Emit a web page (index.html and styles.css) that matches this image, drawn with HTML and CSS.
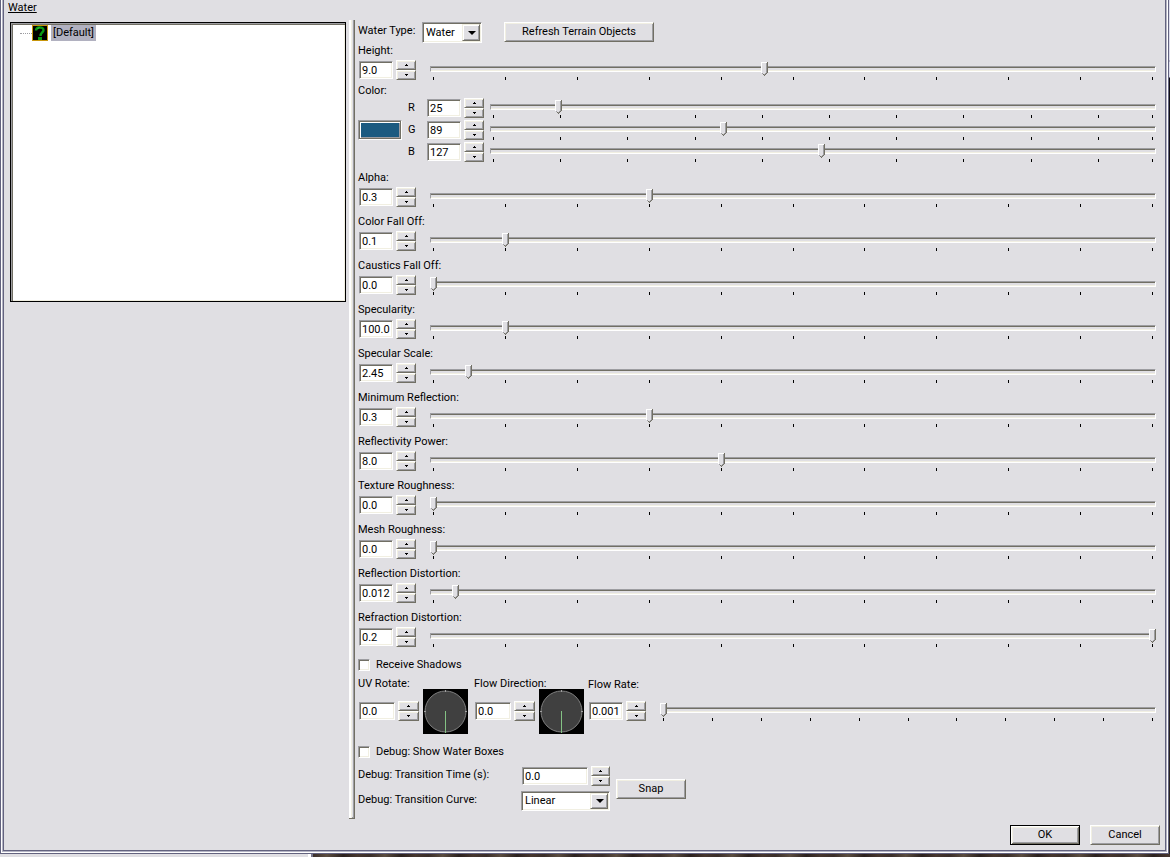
FILE: index.html
```
<!DOCTYPE html>
<html lang="en">
<head>
<meta charset="utf-8">
<title>Water</title>
<link rel="stylesheet" href="styles.css">
</head>
<body>
<div class="desktop">
	<main class="window">
		<h1 class="title">Water</h1>
		<div class="body">
			<div class="tree">
				<div class="node">
					<span class="branch"></span>
					<svg class="icon" width="16" height="16" viewBox="0 0 16 16">
						<rect x="0.5" y="0.5" width="15" height="15" fill="#000" stroke="#c8960c"/>
						<path d="M4 5.5C4 1.5 11.5 1.5 11.5 5C11.5 7.5 8.5 7.5 8.5 11" fill="none" stroke="#0a9a14" stroke-width="2.4"/>
						<path d="M5.5 3.5L7.5 2.5" stroke="#2fd03a"/>
						<rect x="6" y="12" width="4" height="3" fill="#0a9a14"/>
					</svg>
					<span class="node-name">[Default]</span>
				</div>
			</div>
			<div class="splitter"></div>

			<form class="props">
				<div class="type-row">
					<label for="type">Water Type:</label>
					<span class="combo combo-type"><select id="type"><option>Water</option></select></span>
					<button type="button" class="btn refresh">Refresh Terrain Objects</button>
				</div>

				<div class="field first">
					<label for="height">Height:</label>
					<div class="controls">
						<input class="num" id="height" type="text" value="9.0">
						<span class="spin"><button type="button" class="up" aria-label="Up"></button><button type="button" class="down" aria-label="Down"></button></span>
						<div class="slider"><input type="range" aria-label="Height" min="0" max="1000" value="460"></div>
					</div>
				</div>

				<div class="color">
					<div class="color-left">
						<label for="swatch">Color:</label>
						<button type="button" class="swatch" id="swatch"></button>
					</div>
					<div class="channels">
						<div class="controls">
							<label for="red">R</label>
							<input class="num" id="red" type="text" value="25">
							<span class="spin"><button type="button" class="up" aria-label="Up"></button><button type="button" class="down" aria-label="Down"></button></span>
							<div class="slider" data-step="26"><input type="range" aria-label="Red" min="0" max="255" value="25"></div>
						</div>
						<div class="controls">
							<label for="green">G</label>
							<input class="num" id="green" type="text" value="89">
							<span class="spin"><button type="button" class="up" aria-label="Up"></button><button type="button" class="down" aria-label="Down"></button></span>
							<div class="slider" data-step="26"><input type="range" aria-label="Green" min="0" max="255" value="89"></div>
						</div>
						<div class="controls">
							<label for="blue">B</label>
							<input class="num" id="blue" type="text" value="127">
							<span class="spin"><button type="button" class="up" aria-label="Up"></button><button type="button" class="down" aria-label="Down"></button></span>
							<div class="slider" data-step="26"><input type="range" aria-label="Blue" min="0" max="255" value="127"></div>
						</div>
					</div>
				</div>

				<div class="field">
					<label for="alpha">Alpha:</label>
					<div class="controls">
						<input class="num" id="alpha" type="text" value="0.3">
						<span class="spin"><button type="button" class="up" aria-label="Up"></button><button type="button" class="down" aria-label="Down"></button></span>
						<div class="slider"><input type="range" aria-label="Alpha" min="0" max="1000" value="300"></div>
					</div>
				</div>
				<div class="field">
					<label for="color-fall">Color Fall Off:</label>
					<div class="controls">
						<input class="num" id="color-fall" type="text" value="0.1">
						<span class="spin"><button type="button" class="up" aria-label="Up"></button><button type="button" class="down" aria-label="Down"></button></span>
						<div class="slider"><input type="range" aria-label="Color Fall Off" min="0" max="1000" value="100"></div>
					</div>
				</div>
				<div class="field">
					<label for="caustics">Caustics Fall Off:</label>
					<div class="controls">
						<input class="num" id="caustics" type="text" value="0.0">
						<span class="spin"><button type="button" class="up" aria-label="Up"></button><button type="button" class="down" aria-label="Down"></button></span>
						<div class="slider"><input type="range" aria-label="Caustics Fall Off" min="0" max="1000" value="0"></div>
					</div>
				</div>
				<div class="field">
					<label for="specularity">Specularity:</label>
					<div class="controls">
						<input class="num" id="specularity" type="text" value="100.0">
						<span class="spin"><button type="button" class="up" aria-label="Up"></button><button type="button" class="down" aria-label="Down"></button></span>
						<div class="slider"><input type="range" aria-label="Specularity" min="0" max="1000" value="100"></div>
					</div>
				</div>
				<div class="field">
					<label for="spec-scale">Specular Scale:</label>
					<div class="controls">
						<input class="num" id="spec-scale" type="text" value="2.45">
						<span class="spin"><button type="button" class="up" aria-label="Up"></button><button type="button" class="down" aria-label="Down"></button></span>
						<div class="slider"><input type="range" aria-label="Specular Scale" min="0" max="1000" value="49"></div>
					</div>
				</div>
				<div class="field">
					<label for="min-reflection">Minimum Reflection:</label>
					<div class="controls">
						<input class="num" id="min-reflection" type="text" value="0.3">
						<span class="spin"><button type="button" class="up" aria-label="Up"></button><button type="button" class="down" aria-label="Down"></button></span>
						<div class="slider"><input type="range" aria-label="Minimum Reflection" min="0" max="1000" value="300"></div>
					</div>
				</div>
				<div class="field">
					<label for="power">Reflectivity Power:</label>
					<div class="controls">
						<input class="num" id="power" type="text" value="8.0">
						<span class="spin"><button type="button" class="up" aria-label="Up"></button><button type="button" class="down" aria-label="Down"></button></span>
						<div class="slider"><input type="range" aria-label="Reflectivity Power" min="0" max="1000" value="400"></div>
					</div>
				</div>
				<div class="field">
					<label for="texture">Texture Roughness:</label>
					<div class="controls">
						<input class="num" id="texture" type="text" value="0.0">
						<span class="spin"><button type="button" class="up" aria-label="Up"></button><button type="button" class="down" aria-label="Down"></button></span>
						<div class="slider"><input type="range" aria-label="Texture Roughness" min="0" max="1000" value="0"></div>
					</div>
				</div>
				<div class="field">
					<label for="mesh">Mesh Roughness:</label>
					<div class="controls">
						<input class="num" id="mesh" type="text" value="0.0">
						<span class="spin"><button type="button" class="up" aria-label="Up"></button><button type="button" class="down" aria-label="Down"></button></span>
						<div class="slider"><input type="range" aria-label="Mesh Roughness" min="0" max="1000" value="0"></div>
					</div>
				</div>
				<div class="field">
					<label for="reflection">Reflection Distortion:</label>
					<div class="controls">
						<input class="num" id="reflection" type="text" value="0.012">
						<span class="spin"><button type="button" class="up" aria-label="Up"></button><button type="button" class="down" aria-label="Down"></button></span>
						<div class="slider"><input type="range" aria-label="Reflection Distortion" min="0" max="1000" value="31"></div>
					</div>
				</div>
				<div class="field">
					<label for="refraction">Refraction Distortion:</label>
					<div class="controls">
						<input class="num" id="refraction" type="text" value="0.2">
						<span class="spin"><button type="button" class="up" aria-label="Up"></button><button type="button" class="down" aria-label="Down"></button></span>
						<div class="slider"><input type="range" aria-label="Refraction Distortion" min="0" max="1000" value="1000"></div>
					</div>
				</div>

				<div class="check">
					<input type="checkbox" id="shadows">
					<label for="shadows">Receive Shadows</label>
				</div>

				<div class="flow">
					<div class="turn">
						<div>
							<label for="uv">UV Rotate:</label>
							<div class="controls">
								<input class="num" id="uv" type="text" value="0.0">
								<span class="spin"><button type="button" class="up" aria-label="Up"></button><button type="button" class="down" aria-label="Down"></button></span>
							</div>
						</div>
						<svg class="dial" width="45" height="45" viewBox="0 0 45 45">
							<rect width="45" height="45" fill="#000"/>
							<circle cx="22.5" cy="22.5" r="20.5" fill="#404040" stroke="#808080"/>
							<path d="M22.5 1v2M22.5 42v2M1 22.5h2M42 22.5h2" stroke="#a0a0a0"/>
							<path d="M22.5 22v22" stroke="#84c284"/>
						</svg>
					</div>
					<div class="turn">
						<div>
							<label for="direction">Flow Direction:</label>
							<div class="controls">
								<input class="num" id="direction" type="text" value="0.0">
								<span class="spin"><button type="button" class="up" aria-label="Up"></button><button type="button" class="down" aria-label="Down"></button></span>
							</div>
						</div>
						<svg class="dial" width="45" height="45" viewBox="0 0 45 45">
							<rect width="45" height="45" fill="#000"/>
							<circle cx="22.5" cy="22.5" r="20.5" fill="#404040" stroke="#808080"/>
							<path d="M22.5 1v2M22.5 42v2M1 22.5h2M42 22.5h2" stroke="#a0a0a0"/>
							<path d="M22.5 22v22" stroke="#84c284"/>
						</svg>
					</div>
					<div class="rate">
						<label for="rate">Flow Rate:</label>
						<div class="controls">
							<input class="num" id="rate" type="text" value="0.001">
							<span class="spin"><button type="button" class="up" aria-label="Up"></button><button type="button" class="down" aria-label="Down"></button></span>
							<div class="slider"><input type="range" aria-label="Flow Rate" min="0" max="1000" value="0"></div>
						</div>
					</div>
				</div>

				<div class="check">
					<input type="checkbox" id="boxes">
					<label for="boxes">Debug: Show Water Boxes</label>
				</div>

				<div class="debug">
					<div class="debug-grid">
						<label for="time">Debug: Transition Time (s):</label>
						<div class="controls">
							<input class="num wide" id="time" type="text" value="0.0">
							<span class="spin"><button type="button" class="up" aria-label="Up"></button><button type="button" class="down" aria-label="Down"></button></span>
						</div>
						<label for="curve">Debug: Transition Curve:</label>
						<span class="combo combo-curve"><select id="curve"><option>Linear</option></select></span>
					</div>
					<button type="button" class="btn">Snap</button>
				</div>
			</form>
		</div>

		<div class="actions">
			<button type="button" class="btn default">OK</button>
			<button type="button" class="btn">Cancel</button>
		</div>
	</main>
	<div class="side"></div>
	<div class="below"><div class="below-panel"></div><div class="below-view"></div></div>
</div>

<script src="script.js"></script>
</body>
</html>
```

FILE: styles.css
```
* {
	box-sizing: border-box;
}

body {
	margin: 0;
	background: #e0dfe3;
	color: #000;
	font: 11px/16px Roboto, "Liberation Sans", sans-serif;
}

button, input, select {
	font: inherit;
	color: inherit;
	margin: 0;
	padding: 0;
	border-radius: 0;
}

.desktop {
	display: grid;
	grid-template-columns: 1fr 1px;
	grid-template-rows: 1fr 3px;
	min-height: 100vh;
}

.window {
	display: flex;
	flex-direction: column;
	padding: 0 5px 5px 6px;
	border: solid #63637f;
	border-width: 0 1px 1px;
	box-shadow: inset 1px 0 #fff, inset -1px -1px #fff, inset 2px 0 #b4b4c4, inset -2px -2px #b4b4c4, inset 3px 0 #63637f, inset -3px -3px #63637f;
}

.side {
	background: linear-gradient(#dcdcec 60px, #9090a4 61px, #dcdcec 62px, #dcdcec 77px, #100e14 78px, #2c2622);
}

.below {
	grid-column: 1 / 3;
	display: flex;
}

.below-panel {
	width: 313px;
	border-right: 2px solid #77778c;
	box-shadow: inset -3px 0 #fff;
}

.below-view {
	flex: 1;
	background: repeating-linear-gradient(100deg, #3a2e29 0, #5b4d40 14px, #2b211e 30px, #46362e 44px, #3a2e29 57px);
}

.title {
	margin: 0 0 4px 1px;
	font-size: 11px;
	line-height: 15px;
	font-weight: normal;
	text-decoration: underline;
}

.body {
	display: flex;
	align-items: flex-start;
	padding-top: 1px;
}

.tree {
	width: 336px;
	height: 280px;
	margin: 2px 3px 0;
	padding: 1px 0 0 9px;
	background: #fff;
	border: 1px solid #000;
	box-shadow: inset 1px 1px #9d9da1, inset 2px 2px #716f64, inset -1px -1px #f1efe2;
}

.node {
	display: flex;
	align-items: center;
	padding-top: 1px;
}

.branch {
	width: 12px;
	border-top: 1px dotted #9d9da1;
}

.node-name {
	margin-left: 3px;
	padding: 0 2px;
	background: #b1b1c0;
}

.splitter {
	align-self: stretch;
	width: 6px;
	border: solid #716f64;
	border-width: 0 1px 1px 0;
	box-shadow: inset 2px 0 #fff, inset 3px 0 #f1efe2, inset -1px -1px #9d9da1;
}

.props {
	flex: 1;
	padding: 2px 7px 8px 3px;
}

label {
	display: block;
	white-space: nowrap;
}

.type-row {
	display: flex;
	height: 21px;
}

.type-row label {
	width: 64px;
	line-height: 18px;
}

.btn {
	width: 70px;
	height: 20px;
	background: #e0dfe3;
	border: 1px solid;
	border-color: #fff #716f64 #716f64 #fff;
	box-shadow: inset 1px 1px #f1efe2, inset -1px -1px #9d9da1;
}

.refresh {
	width: 150px;
	margin-left: 22px;
}

.default {
	border-color: #000;
	box-shadow: inset 1px 1px #fff, inset -1px -1px #716f64, inset 2px 2px #f1efe2, inset -2px -2px #9d9da1;
}

.combo {
	position: relative;
	display: block;
	height: 20px;
}

.combo-type {
	width: 60px;
	height: 21px;
}

.combo-curve {
	width: 89px;
}

.combo select {
	appearance: none;
	width: 100%;
	height: 100%;
	padding: 0 0 0 3px;
	background: #fff;
}

/* drop-down arrow button */
.combo::after {
	content: "";
	position: absolute;
	top: 2px;
	right: 2px;
	bottom: 2px;
	width: 16px;
	pointer-events: none;
	background: #e0dfe3;
	border: 1px solid;
	border-color: #f1efe2 #716f64 #716f64 #f1efe2;
	box-shadow: inset 1px 1px #fff, inset -1px -1px #9d9da1;
}

.combo::before {
	content: "";
	position: absolute;
	z-index: 1;
	top: 50%;
	right: 6px;
	margin-top: -2px;
	border: solid transparent;
	border-width: 4px 4px 0;
	border-top-color: #000;
	pointer-events: none;
}

.num, .combo select {
	border: 1px solid;
	border-color: #9d9da1 #fff #fff #9d9da1;
	box-shadow: inset 1px 1px #716f64, inset -1px -1px #f1efe2;
}

.num {
	width: 34px;
	height: 18px;
	margin: 0 3px 0 1px;
	padding: 0 0 0 2px;
	background: #fff;
}

.spin {
	display: flex;
	flex-direction: column;
	width: 20px;
	height: 20px;
}

.spin button {
	display: flex;
	justify-content: center;
	height: 10px;
	padding-top: 3px;
	background: #e0dfe3;
	border: 1px solid;
	border-color: #fff #716f64 #716f64 #fff;
	box-shadow: inset 1px 1px #f1efe2, inset -1px -1px #9d9da1;
}

.spin button::before {
	content: "";
	width: 1px;
	height: 1px;
	background: #000;
}

.spin .up::before {
	box-shadow: 0 1px #000, 1px 1px #000, -1px 1px #000;
}

.spin .down::before {
	margin-top: 1px;
	box-shadow: 0 -1px #000, 1px -1px #000, -1px -1px #000;
}

.controls {
	display: flex;
	align-items: center;
	height: 20px;
}

.field {
	margin-bottom: 7px;
}

.field label {
	margin-bottom: 1px;
}

.first {
	margin-bottom: 3px;
}

.slider {
	flex: 1;
	position: relative;
	height: 20px;
	margin-left: 14px;
	padding: 2px 0 0;
}

.slider::before {
	content: "";
	position: absolute;
	top: 6px;
	left: 0;
	right: 0;
	height: 4px;
	border: 1px solid;
	border-color: #9d9da1 #fff #fff #9d9da1;
	box-shadow: inset 0 1px #716f64, inset 0 -1px #f1efe2;
}

.slider input {
	appearance: none;
	position: relative;
	display: block;
	width: 100%;
	height: 14px;
	background: none;
}

.slider input::-webkit-slider-thumb {
	appearance: none;
	width: 7px;
	height: 14px;
	background: url("data:image/svg+xml,%3Csvg xmlns='http://www.w3.org/2000/svg' width='7' height='14' shape-rendering='crispEdges'%3E%3Cpath d='M0 0h7v11l-3 3h-1l-3-3z' fill='%23e0dfe3'/%3E%3Cpath d='M0 0h6v1h-5v10h-1z' fill='%23fff'/%3E%3Cpath d='M5 1h1v10h-1v1h-1v1h-1v-1h1v-1h1zM1 11h1v1h-1z' fill='%239d9da1'/%3E%3Cpath d='M6 0h1v11h-1v1h-1v1h-1v1h-1v-1h-1v-1h1v1h1v-1h1v-1h1z' fill='%23716f64'/%3E%3C/svg%3E") no-repeat;
}

.ticks {
	position: relative;
	height: 3px;
	margin: 1px 4px 0 3px;
}

/* each mark sits at its share of the range */
.ticks span {
	position: absolute;
	width: 1px;
	height: 3px;
	background: #000;
}

.color {
	display: flex;
	margin-bottom: 8px;
}

.color-left {
	width: 50px;
}

.swatch {
	display: block;
	width: 44px;
	height: 20px;
	margin-top: 21px;
	background: #1b5a80;
	border: 1px solid;
	border-color: #9d9da1 #fff #fff #9d9da1;
	box-shadow: inset 1px 1px #716f64, inset -1px -1px #716f64, inset 2px 2px #fff, inset -2px -2px #9d9da1;
}

.channels {
	flex: 1;
	display: flex;
	flex-direction: column;
	gap: 2px;
	padding-top: 15px;
}

.channels label {
	width: 18px;
}

.channels .slider {
	margin-left: 6px;
}

.check {
	display: flex;
	align-items: center;
	gap: 6px;
	height: 16px;
	margin-top: 10px;
}

.check input {
	appearance: none;
	width: 12px;
	height: 12px;
	background: #fff;
	border: 1px solid;
	border-color: #9d9da1 #fff #fff #9d9da1;
	box-shadow: inset 1px 1px #716f64, inset -1px -1px #f1efe2;
}

.flow {
	display: flex;
	align-items: flex-start;
	margin-top: 3px;
}

.turn {
	display: flex;
	width: 116px;
}

.turn label {
	width: 65px;
	margin-bottom: 9px;
}

.turn .num {
	width: 36px;
}

.turn .spin {
	width: 21px;
}

.dial {
	margin-top: 13px;
}

.rate {
	flex: 1;
	padding-top: 1px;
	margin-left: -2px;
}

.rate label {
	margin-bottom: 8px;
}

.debug {
	display: flex;
	align-items: center;
	gap: 6px;
	margin-top: 6px;
}

.debug-grid {
	display: grid;
	grid-template-columns: 163px 89px;
	row-gap: 5px;
}

.debug-grid label {
	padding-top: 1px;
}

.wide {
	width: 66px;
}

.actions {
	display: flex;
	justify-content: flex-end;
	gap: 10px;
	margin-top: auto;
	padding: 0 3px 3px;
}
```

FILE: script.js
```
document.querySelectorAll(".slider").forEach((slider) => {
	const max = Number(slider.querySelector("input").max);
	const step = Number(slider.dataset.step || max / 10);
	const ticks = document.createElement("div");
	ticks.className = "ticks";

	for (let v = 0; v <= max; v += step) {
		addTick(v);
	}
	// the end of the range always gets a mark
	if (max % step !== 0) {
		addTick(max);
	}

	function addTick(v) {
		const tick = document.createElement("span");
		tick.style.left = `${(v / max) * 100}%`;
		ticks.appendChild(tick);
	}

	slider.appendChild(ticks);
});
```
